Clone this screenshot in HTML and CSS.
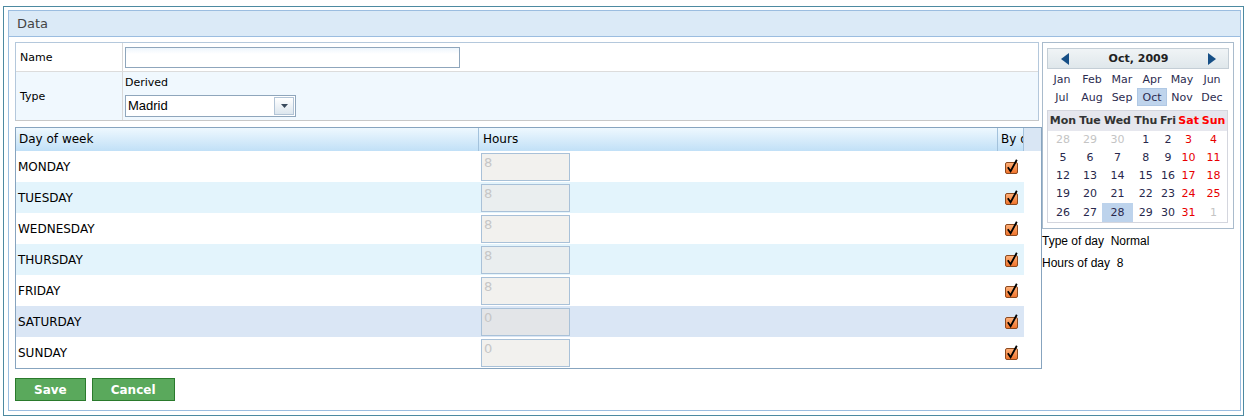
FILE: index.html
```html
<!DOCTYPE html>
<html>
<head>
<meta charset="utf-8">
<title>Data</title>
<link rel="stylesheet" href="styles.css">
</head>
<body>
<div class="window">
  <div class="panel">
    <div class="title">Data</div>
    <div class="content">
      <div class="main">
        <div class="left">
          <div class="form">
            <div class="frow name-row">
              <div class="flabel">Name</div>
              <div class="fval"><input class="text" type="text"></div>
            </div>
            <div class="frow type-row">
              <div class="flabel">Type</div>
              <div class="fval type-val">
                <div class="derived">Derived</div>
                <div class="combo">
                  <span class="combo-text">Madrid</span>
                  <span class="combo-btn"><svg width="7" height="4" viewBox="0 0 7 4"><path d="M0 0H7L3.5 4Z" fill="#3a4a5c"/></svg></span>
                </div>
              </div>
            </div>
          </div>

          <div class="grid">
            <div class="ghead">
              <div class="hc c1">Day of week</div>
              <div class="hc c2">Hours</div>
              <div class="hc c3">By day</div>
              <div class="hfill"></div>
            </div>
            <div class="grow">
              <div class="c1">MONDAY</div>
              <div class="c2"><div class="hours">8</div></div>
              <div class="c3"><svg class="check" width="14" height="15" viewBox="0 0 14 15"><defs><linearGradient id="og1" x1="0" y1="0" x2="0" y2="1"><stop offset="0" stop-color="#ffb27a"/><stop offset="1" stop-color="#f0722a"/></linearGradient></defs><rect x="0.5" y="3.5" width="12" height="11" rx="1.5" fill="url(#og1)" stroke="#8c4a20"/><path d="M2.8 8.3L5.6 12.2L11.8 0.8" fill="none" stroke="#000" stroke-width="1.8"/></svg></div>
            </div>
            <div class="grow alt">
              <div class="c1">TUESDAY</div>
              <div class="c2"><div class="hours">8</div></div>
              <div class="c3"><svg class="check" width="14" height="15" viewBox="0 0 14 15"><rect x="0.5" y="3.5" width="12" height="11" rx="1.5" fill="url(#og1)" stroke="#8c4a20"/><path d="M2.8 8.3L5.6 12.2L11.8 0.8" fill="none" stroke="#000" stroke-width="1.8"/></svg></div>
            </div>
            <div class="grow">
              <div class="c1">WEDNESDAY</div>
              <div class="c2"><div class="hours">8</div></div>
              <div class="c3"><svg class="check" width="14" height="15" viewBox="0 0 14 15"><rect x="0.5" y="3.5" width="12" height="11" rx="1.5" fill="url(#og1)" stroke="#8c4a20"/><path d="M2.8 8.3L5.6 12.2L11.8 0.8" fill="none" stroke="#000" stroke-width="1.8"/></svg></div>
            </div>
            <div class="grow alt">
              <div class="c1">THURSDAY</div>
              <div class="c2"><div class="hours">8</div></div>
              <div class="c3"><svg class="check" width="14" height="15" viewBox="0 0 14 15"><rect x="0.5" y="3.5" width="12" height="11" rx="1.5" fill="url(#og1)" stroke="#8c4a20"/><path d="M2.8 8.3L5.6 12.2L11.8 0.8" fill="none" stroke="#000" stroke-width="1.8"/></svg></div>
            </div>
            <div class="grow">
              <div class="c1">FRIDAY</div>
              <div class="c2"><div class="hours">8</div></div>
              <div class="c3"><svg class="check" width="14" height="15" viewBox="0 0 14 15"><rect x="0.5" y="3.5" width="12" height="11" rx="1.5" fill="url(#og1)" stroke="#8c4a20"/><path d="M2.8 8.3L5.6 12.2L11.8 0.8" fill="none" stroke="#000" stroke-width="1.8"/></svg></div>
            </div>
            <div class="grow sel">
              <div class="c1">SATURDAY</div>
              <div class="c2"><div class="hours">0</div></div>
              <div class="c3"><svg class="check" width="14" height="15" viewBox="0 0 14 15"><rect x="0.5" y="3.5" width="12" height="11" rx="1.5" fill="url(#og1)" stroke="#8c4a20"/><path d="M2.8 8.3L5.6 12.2L11.8 0.8" fill="none" stroke="#000" stroke-width="1.8"/></svg></div>
            </div>
            <div class="grow">
              <div class="c1">SUNDAY</div>
              <div class="c2"><div class="hours">0</div></div>
              <div class="c3"><svg class="check" width="14" height="15" viewBox="0 0 14 15"><rect x="0.5" y="3.5" width="12" height="11" rx="1.5" fill="url(#og1)" stroke="#8c4a20"/><path d="M2.8 8.3L5.6 12.2L11.8 0.8" fill="none" stroke="#000" stroke-width="1.8"/></svg></div>
            </div>
          </div>
        </div>

        <div class="right">
          <div class="calendar">
            <div class="cal-head">
              <svg class="arrow" width="8" height="12" viewBox="0 0 8 12"><path d="M8 0V12L0 6Z" fill="#164f86"/></svg>
              <span class="cal-title">Oct, 2009</span>
              <svg class="arrow" width="8" height="12" viewBox="0 0 8 12"><path d="M0 0V12L8 6Z" fill="#164f86"/></svg>
            </div>
            <div class="months">
              <span>Jan</span><span>Feb</span><span>Mar</span><span>Apr</span><span>May</span><span>Jun</span>
              <span>Jul</span><span>Aug</span><span>Sep</span><span class="cur">Oct</span><span>Nov</span><span>Dec</span>
            </div>
            <table class="days">
              <tr class="dhead"><th>Mon</th><th>Tue</th><th>Wed</th><th>Thu</th><th>Fri</th><th class="we">Sat</th><th class="we">Sun</th></tr>
              <tr><td class="other">28</td><td class="other">29</td><td class="other">30</td><td>1</td><td>2</td><td class="we">3</td><td class="we">4</td></tr>
              <tr><td>5</td><td>6</td><td>7</td><td>8</td><td>9</td><td class="we">10</td><td class="we">11</td></tr>
              <tr><td>12</td><td>13</td><td>14</td><td>15</td><td>16</td><td class="we">17</td><td class="we">18</td></tr>
              <tr><td>19</td><td>20</td><td>21</td><td>22</td><td>23</td><td class="we">24</td><td class="we">25</td></tr>
              <tr class="last"><td>26</td><td>27</td><td class="today">28</td><td>29</td><td>30</td><td class="we">31</td><td class="other">1</td></tr>
            </table>
          </div>
          <div class="info">
            <div>Type of day&nbsp; Normal</div>
            <div>Hours of day&nbsp; 8</div>
          </div>
        </div>
      </div>
      <div class="buttons">
        <button class="btn" type="button">Save</button>
        <button class="btn" type="button">Cancel</button>
      </div>
    </div>
  </div>
</div>
</body>
</html>
```

FILE: styles.css
```css
* { box-sizing: border-box; }

body {
  margin: 0;
  background: #fff;
  font-family: "DejaVu Sans", sans-serif;
  color: #000;
}

.window {
  margin: 6px 0 0 3px;
  width: 1241px;
  height: 410px;
  border: 1px solid #4d8aa1;
  padding: 3px 2px 4px 4px;
}

.panel {
  height: 100%;
  border: 1px solid #9bbde0;
}

.title {
  height: 26px;
  line-height: 26px;
  background: #dbeaf7;
  border-bottom: 1px solid #9bbde0;
  padding-left: 8px;
  font-size: 13px;
  color: #444;
}

.content {
  padding: 5px 6px 0 6px;
}

.main {
  display: flex;
  align-items: flex-start;
}

.left {
  width: 1027px;
}

/* name/type form */
.form {
  width: 1024px;
  border: 1px solid #b4c8dc;
  border-bottom-color: #c8c8c8;
}

.frow {
  display: flex;
}

.name-row {
  height: 29px;
  border-bottom: 1px solid #dcdcdc;
}

.type-row {
  height: 48px;
  background: #f0f8fe;
}

.flabel {
  width: 107px;
  border-right: 1px solid #d8d8d8;
  padding-left: 4px;
  display: flex;
  align-items: center;
  font-size: 11px;
}

.fval {
  padding-left: 2px;
  display: flex;
  align-items: center;
}

.text {
  width: 335px;
  height: 21px;
  margin: 0;
  border: 1px solid #8fa6bc;
  background: linear-gradient(#eef6fc, #fff 6px);
  padding: 0 3px;
  font: 12px "DejaVu Sans", sans-serif;
}

.type-val {
  flex-direction: column;
  align-items: flex-start;
  padding-top: 4px;
}

.derived {
  height: 14px;
  line-height: 14px;
  font-size: 11px;
  margin-bottom: 5px;
}

.combo {
  display: flex;
  width: 171px;
  height: 22px;
  border: 1px solid #8fa6bc;
  background: #fff;
}

.combo-text {
  flex: 1;
  padding-left: 2px;
  font: 13px "Liberation Sans", sans-serif;
  line-height: 20px;
}

.combo-btn {
  width: 20px;
  margin: 1px;
  border: 1px solid #b2c4d6;
  background: linear-gradient(#ffffff, #dce6ee);
  display: flex;
  align-items: center;
  justify-content: center;
}

/* days grid */
.grid {
  margin-top: 6px;
  width: 1027px;
  border: 1px solid #87a4bf;
}

.ghead {
  display: flex;
  height: 23px;
  background: #d9e6f4;
}

.hc {
  height: 23px;
  background: linear-gradient(#eef8fe, #c1e0f7);
  border-right: 1px solid #a3c2dc;
  font-size: 12px;
  line-height: 23px;
  padding-left: 3px;
  overflow: hidden;
  white-space: nowrap;
}

.c1 { width: 463px; }
.c2 { width: 519px; }
.c3 { width: 26px; }

.ghead .c2 { padding-left: 4px; }

.hfill { flex: 1; }

.grow {
  display: flex;
  width: 1008px;
  height: 31px;
  background: #fff;
}

.grow.alt { background: #e3f4fc; }
.grow.sel { background: #dae6f5; }

.grow .c1 {
  padding-left: 2px;
  line-height: 32px;
  font-size: 12px;
}

.grow .c2 {
  padding: 2px 0 0 2px;
}

.hours {
  width: 89px;
  height: 28px;
  border: 1px solid #a9c1d8;
  background: #f2f1ee;
  color: #c6c6c6;
  font-size: 13px;
  line-height: 16px;
  padding: 1px 2px;
}

.grow.alt .hours { background: #eaeeef; }
.grow.sel .hours { background: #e3e5e8; }

.grow .c3 {
  display: flex;
  align-items: center;
  justify-content: center;
  padding: 0 0 1px 2px;
}

.check { display: block; }

/* right column */
.right {
  width: 192px;
}

.calendar {
  width: 192px;
  border: 1px solid #a9bbcc;
  padding: 5px 4px 5px 4px;
}

.cal-head {
  height: 21px;
  display: flex;
  align-items: center;
  justify-content: space-between;
  padding: 0 12px 0 13px;
  border: 1px solid #c4ced6;
  background: linear-gradient(#f0f4f6, #dfe7eb);
}

.cal-title {
  font-weight: bold;
  font-size: 11px;
  color: #222;
}

.months {
  margin-top: 1px;
  display: grid;
  grid-template-columns: repeat(6, 30px);
  grid-auto-rows: 18px;
  font-size: 11px;
  color: #2c2c50;
}

.months span {
  display: flex;
  align-items: center;
  justify-content: center;
}

.months .cur {
  background: #bfd4ec;
  border: 1px solid #b0c8e4;
}

.days {
  margin-top: 4px;
  width: 181px;
  border-collapse: collapse;
  border: 1px solid #d4d6de;
}

.days th {
  height: 20px;
  padding: 0;
  background: #e6e7ee;
  font-size: 11px;
  font-weight: bold;
  color: #333;
  text-align: center;
}

.days td {
  height: 18px;
  padding: 0;
  font-size: 11px;
  color: #28284c;
  text-align: center;
}

.days tr.last td { height: 20px; }

.days .we { color: #f00; }
.days td.we { color: #e80000; }
.days td.other { color: #c4c4c4; }
.days td.today { background: #bdd3ec; }

.info {
  margin-top: 1px;
  font: 12px "Liberation Sans", sans-serif;
  line-height: 22px;
}

/* buttons */
.buttons {
  margin-top: 9px;
  display: flex;
  gap: 6px;
}

.btn {
  height: 23px;
  padding: 0 18px;
  border: 1px solid #2a7a2c;
  background: #5aa95c;
  color: #fff;
  font: bold 12px "DejaVu Sans", sans-serif;
  cursor: pointer;
}
```
